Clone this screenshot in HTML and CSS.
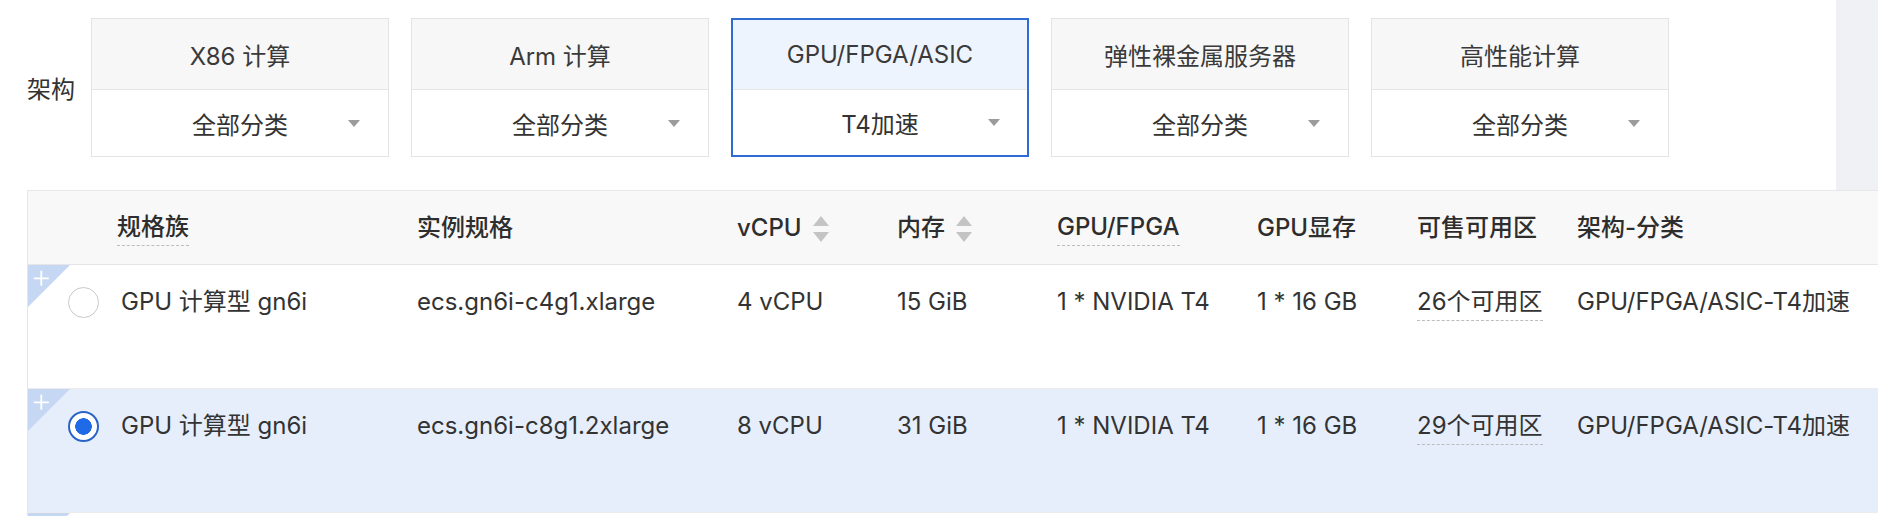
FILE: index.html
```html
<!DOCTYPE html>
<html lang="zh-CN">
<head>
<meta charset="utf-8">
<title>实例规格</title>
<link rel="stylesheet" href="styles.css">
</head>
<body>
<div class="page">
  <div class="top">
    <div class="filter">
      <div class="filter-label">架构</div>
      <div class="cats">
        <div class="cat">
          <div class="cat-head">X86 计算</div>
          <div class="cat-select"><span></span><span class="cat-value">全部分类</span><span class="caret"></span></div>
        </div>
        <div class="cat">
          <div class="cat-head">Arm 计算</div>
          <div class="cat-select"><span></span><span class="cat-value">全部分类</span><span class="caret"></span></div>
        </div>
        <div class="cat active">
          <div class="cat-head">GPU/FPGA/ASIC</div>
          <div class="cat-select"><span></span><span class="cat-value">T4加速</span><span class="caret"></span></div>
        </div>
        <div class="cat">
          <div class="cat-head">弹性裸金属服务器</div>
          <div class="cat-select"><span></span><span class="cat-value">全部分类</span><span class="caret"></span></div>
        </div>
        <div class="cat">
          <div class="cat-head">高性能计算</div>
          <div class="cat-select"><span></span><span class="cat-value">全部分类</span><span class="caret"></span></div>
        </div>
      </div>
    </div>
    <div class="side"></div>
  </div>

  <div class="table">
    <div class="thead">
      <div class="th"></div>
      <div class="th"><span class="dashed">规格族</span></div>
      <div class="th">实例规格</div>
      <div class="th"><span class="sortable">vCPU<svg class="sort" width="16" height="26" viewBox="0 0 16 26"><path d="M8 0L16 10H0Z M0 16H16L8 26Z" fill="#c4c4c4"/></svg></span></div>
      <div class="th"><span class="sortable">内存<svg class="sort" width="16" height="26" viewBox="0 0 16 26"><path d="M8 0L16 10H0Z M0 16H16L8 26Z" fill="#c4c4c4"/></svg></span></div>
      <div class="th"><span class="dashed">GPU/FPGA</span></div>
      <div class="th">GPU显存</div>
      <div class="th">可售可用区</div>
      <div class="th">架构-分类</div>
    </div>

    <div class="tr">
      <svg class="corner" width="42" height="42" viewBox="0 0 42 42"><path d="M0 0H42L0 42Z" fill="#c6d7f3"/><path d="M13.3 5.8V20.8M5.8 13.3H20.8" stroke="#fff" stroke-width="1.8"/></svg>
      <div class="td lead"><span class="radio"></span></div>
      <div class="td family">GPU 计算型 gn6i</div>
      <div class="td">ecs.gn6i-c4g1.xlarge</div>
      <div class="td">4 vCPU</div>
      <div class="td">15 GiB</div>
      <div class="td">1 * NVIDIA T4</div>
      <div class="td">1 * 16 GB</div>
      <div class="td"><span class="dashed">26个可用区</span></div>
      <div class="td">GPU/FPGA/ASIC-T4加速</div>
    </div>

    <div class="tr selected">
      <svg class="corner" width="42" height="42" viewBox="0 0 42 42"><path d="M0 0H42L0 42Z" fill="#c6d7f3"/><path d="M13.3 5.8V20.8M5.8 13.3H20.8" stroke="#fff" stroke-width="1.8"/></svg>
      <div class="td lead"><span class="radio checked"></span></div>
      <div class="td family">GPU 计算型 gn6i</div>
      <div class="td">ecs.gn6i-c8g1.2xlarge</div>
      <div class="td">8 vCPU</div>
      <div class="td">31 GiB</div>
      <div class="td">1 * NVIDIA T4</div>
      <div class="td">1 * 16 GB</div>
      <div class="td"><span class="dashed">29个可用区</span></div>
      <div class="td">GPU/FPGA/ASIC-T4加速</div>
    </div>

    <div class="tr">
      <svg class="corner" width="42" height="42" viewBox="0 0 42 42"><path d="M0 0H42L0 42Z" fill="#c6d7f3"/></svg>
    </div>
  </div>
</div>
</body>
</html>
```

FILE: styles.css
```css
html, body {
  margin: 0;
  padding: 0;
  background: #ffffff;
}

body {
  font-family: "Inter", "Noto Sans CJK SC", sans-serif;
  font-feature-settings: "calt" 0;
  color: #333333;
}

.page {
  width: 1878px;
  height: 516px;
  overflow: hidden;
}

/* ---------- top filter ---------- */
.top {
  display: flex;
  height: 190px;
}

.filter {
  flex: 1;
  display: flex;
  align-items: flex-start;
  padding: 18px 0 0 27px;
}

.filter-label {
  width: 64px;
  height: 139px;
  display: flex;
  align-items: center;
  font-size: 24px;
  color: #333;
}

.cats {
  display: flex;
  gap: 22px;
}

.cat {
  width: 298px;
  height: 139px;
  box-sizing: border-box;
  border: 1px solid #e4e4e4;
  display: flex;
  flex-direction: column;
  background: #fff;
}

.cat-head {
  height: 71px;
  box-sizing: border-box;
  flex: none;
  border-bottom: 1px solid #e6e6e6;
  background: #f7f7f7;
  display: flex;
  align-items: center;
  justify-content: center;
  font-size: 24px;
  color: #3a3a3a;
}

.cat-select {
  flex: 1;
  display: grid;
  grid-template-columns: 1fr auto 1fr;
  align-items: center;
  font-size: 24px;
  color: #333;
}

.caret {
  justify-self: end;
  margin-right: 28px;
  width: 0;
  height: 0;
  border-left: 6px solid transparent;
  border-right: 6px solid transparent;
  border-top: 7px solid #9b9b9b;
}

.cat.active {
  border: 2px solid #2e6bd3;
}

.cat.active .cat-head {
  height: 70px;
  background: #eef4fe;
}

.cat.active .caret {
  margin-right: 27px;
}

.side {
  width: 42px;
  flex: none;
  background: #eff1f5;
}

/* ---------- table ---------- */
.table {
  margin-left: 27px;
  border-top: 1px solid #e8e8e8;
  border-left: 1px solid #e6e6e6;
}

.thead,
.tr {
  display: grid;
  grid-template-columns: 89px 300px 320px 160px 160px 200px 160px 160px 1fr;
}

.thead {
  height: 73px;
  background: #f8f8f8;
  border-bottom: 1px solid #e6e6e6;
  align-items: center;
  font-size: 24px;
  font-weight: 500;
  line-height: 34px;
  color: #2e2e2e;
}

.th {
  white-space: nowrap;
}

.dashed {
  display: inline-block;
  border-bottom: 1px dashed #bcbcbc;
  padding-bottom: 1px;
}

.sortable {
  display: inline-flex;
  align-items: center;
  gap: 11px;
}

.sort {
  display: block;
  margin-top: 2px;
}

.tr {
  position: relative;
  height: 123px;
  border-bottom: 1px solid #ececec;
  align-items: start;
  font-size: 24px;
  line-height: 34px;
  color: #333;
  background: #fff;
}

.tr.selected {
  background: #e6eefb;
}

.corner {
  position: absolute;
  left: 0;
  top: 0;
}

.td {
  padding-top: 20px;
  white-space: nowrap;
}

.td.family {
  padding-left: 4px;
}

.radio {
  display: block;
  box-sizing: border-box;
  width: 31px;
  height: 31px;
  margin: 2px 0 0 40px;
  border: 1.5px solid #c9c9c9;
  border-radius: 50%;
  background: #fff;
}

.radio.checked {
  border: 2px solid #2a63c8;
  background: radial-gradient(circle, #1f6ae6 0 8px, #ffffff 8.6px);
}
```
